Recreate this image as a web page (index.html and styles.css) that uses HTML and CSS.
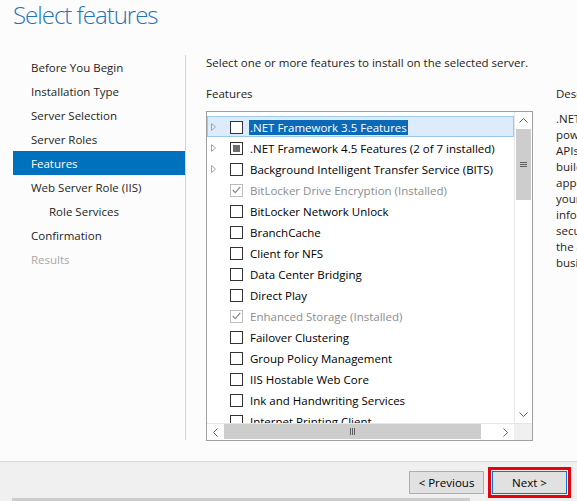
FILE: index.html
```html
<!DOCTYPE html>
<html>
<head>
<meta charset="utf-8">
<link rel="stylesheet" href="styles.css">
</head>
<body>
<div class="window">
  <header class="hdr"><h1 class="title">Select features</h1></header>
  <div class="main">
    <nav class="nav">
      <div class="nav-item">Before You Begin</div>
      <div class="nav-item">Installation Type</div>
      <div class="nav-item">Server Selection</div>
      <div class="nav-item">Server Roles</div>
      <div class="nav-item active">Features</div>
      <div class="nav-item">Web Server Role (IIS)</div>
      <div class="nav-item sub">Role Services</div>
      <div class="nav-item">Confirmation</div>
      <div class="nav-item disabled">Results</div>
    </nav>
    <section class="content">
      <p class="intro">Select one or more features to install on the selected server.</p>
      <div class="cols">
        <div class="feat-col">
          <div class="col-h">Features</div>
          <div class="listbox">
            <div class="list-area">
              <div class="rows">
                <div class="row sel"><svg class="exp" viewBox="0 0 5 8"><polygon points="0.5,0.5 4.5,4 0.5,7.5" fill="none" stroke="#a6a6a6"/></svg><span class="cb"></span><span class="lbl hl">.NET Framework 3.5 Features</span></div>
                <div class="row"><svg class="exp" viewBox="0 0 5 8"><polygon points="0.5,0.5 4.5,4 0.5,7.5" fill="none" stroke="#a6a6a6"/></svg><span class="cb ind"></span><span class="lbl">.NET Framework 4.5 Features (2 of 7 installed)</span></div>
                <div class="row"><svg class="exp" viewBox="0 0 5 8"><polygon points="0.5,0.5 4.5,4 0.5,7.5" fill="none" stroke="#a6a6a6"/></svg><span class="cb"></span><span class="lbl">Background Intelligent Transfer Service (BITS)</span></div>
                <div class="row dis"><span class="exp"></span><span class="cb"><svg width="9" height="8" viewBox="0 0 9 8"><polyline points="0.8,4 3.3,6.6 8.2,0.8" fill="none" stroke="#8a8a8a" stroke-width="1.3"/></svg></span><span class="lbl">BitLocker Drive Encryption (Installed)</span></div>
                <div class="row"><span class="exp"></span><span class="cb"></span><span class="lbl">BitLocker Network Unlock</span></div>
                <div class="row"><span class="exp"></span><span class="cb"></span><span class="lbl">BranchCache</span></div>
                <div class="row"><span class="exp"></span><span class="cb"></span><span class="lbl">Client for NFS</span></div>
                <div class="row"><span class="exp"></span><span class="cb"></span><span class="lbl">Data Center Bridging</span></div>
                <div class="row"><span class="exp"></span><span class="cb"></span><span class="lbl">Direct Play</span></div>
                <div class="row dis"><span class="exp"></span><span class="cb"><svg width="9" height="8" viewBox="0 0 9 8"><polyline points="0.8,4 3.3,6.6 8.2,0.8" fill="none" stroke="#8a8a8a" stroke-width="1.3"/></svg></span><span class="lbl">Enhanced Storage (Installed)</span></div>
                <div class="row"><span class="exp"></span><span class="cb"></span><span class="lbl">Failover Clustering</span></div>
                <div class="row"><span class="exp"></span><span class="cb"></span><span class="lbl">Group Policy Management</span></div>
                <div class="row"><span class="exp"></span><span class="cb"></span><span class="lbl">IIS Hostable Web Core</span></div>
                <div class="row"><span class="exp"></span><span class="cb"></span><span class="lbl">Ink and Handwriting Services</span></div>
                <div class="row"><span class="exp"></span><span class="cb"></span><span class="lbl">Internet Printing Client</span></div>
              </div>
              <div class="vscroll">
                <div class="sb-btn"><svg width="9" height="5" viewBox="0 0 9 5"><polyline points="0.5,4.5 4.5,0.5 8.5,4.5" fill="none" stroke="#606060"/></svg></div>
                <div class="vthumb"><svg width="7" height="5" viewBox="0 0 7 5"><path d="M0 0.5H7M0 2.5H7M0 4.5H7" stroke="#606060"/></svg></div>
                <div class="vtrack"></div>
                <div class="sb-btn"><svg width="9" height="5" viewBox="0 0 9 5"><polyline points="0.5,0.5 4.5,4.5 8.5,0.5" fill="none" stroke="#606060"/></svg></div>
              </div>
            </div>
            <div class="hscroll">
              <div class="sb-btn h"><svg width="5" height="9" viewBox="0 0 5 9"><polyline points="4.5,0.5 0.5,4.5 4.5,8.5" fill="none" stroke="#606060"/></svg></div>
              <div class="htrack"><div class="hthumb"><svg width="5" height="7" viewBox="0 0 5 7"><path d="M0.5 0V7M2.5 0V7M4.5 0V7" stroke="#606060"/></svg></div></div>
              <div class="sb-btn h"><svg width="5" height="9" viewBox="0 0 5 9"><polyline points="0.5,0.5 4.5,4.5 0.5,8.5" fill="none" stroke="#606060"/></svg></div>
              <div class="corner"></div>
            </div>
          </div>
        </div>
        <div class="desc-col">
          <div class="col-h">Description</div>
          <p class="desc">.NET Framework 3.5 combines the<br>power of the .NET Framework 2.0<br>APIs with new technologies for<br>building applications that offer<br>appealing user interfaces, protect<br>your customers' personal identity<br>information, enable seamless and<br>secure communication, and provide<br>the ability to model a range of<br>business processes.</p>
        </div>
      </div>
    </section>
  </div>
  <footer class="footer">
    <button class="btn">&lt; Previous</button>
    <button class="btn next">Next &gt;</button>
  </footer>
  <div class="strip"><div class="strip-bar"></div></div>
</div>
</body>
</html>
```
FILE: styles.css
```css
* { box-sizing: border-box; }
html, body { margin: 0; padding: 0; }
body {
  width: 577px;
  height: 501px;
  overflow: hidden;
  background: #fcfcfc;
  font-family: "Open Sans", "Noto Sans", sans-serif;
  font-size: 11.5px;
  color: #1e1e1e;
}
.window { display: flex; flex-direction: column; height: 501px; }
.hdr { height: 55px; flex: none; padding-left: 13px; }
.title {
  margin: 0;
  font-weight: 300;
  font-size: 24px;
  line-height: 30px;
  color: #1f73b7;
  letter-spacing: -1px;
  white-space: nowrap;
}
.main { flex: 1; display: flex; min-height: 0; }
.nav {
  width: 186px;
  flex: none;
  height: 385px;
  border-right: 1px solid #d5d5d5;
  padding-left: 13px;
}
.nav-item {
  height: 24px;
  padding: 3px 0 0 18px;
  line-height: 20px;
  white-space: nowrap;
}
.nav-item.active { background: #0071bc; color: #fff; }
.nav-item.sub { padding-left: 36px; }
.nav-item.disabled { color: #a8a8a8; }

.content { flex: 1; padding-left: 20px; min-width: 0; }
.intro { margin: 0; line-height: 16px; white-space: nowrap; }
.cols { display: flex; margin-top: 15px; }
.feat-col { width: 327px; flex: none; }
.col-h { line-height: 16px; height: 16px; margin-bottom: 9px; white-space: nowrap; }
.desc-col { margin-left: 23px; width: 220px; flex: none; }
.desc { margin: 7px 0 0; line-height: 16px; white-space: nowrap; }

.listbox {
  height: 330px;
  border: 1px solid #a0a0a0;
  background: #fff;
  display: flex;
  flex-direction: column;
}
.list-area { display: flex; height: 311px; flex: none; }
.rows { width: 307px; flex: none; padding-top: 4px; overflow: hidden; }
.row {
  height: 21px;
  padding: 1px 0 0 4px;
  display: flex;
  align-items: center;
  white-space: nowrap;
}
.row.sel { background: #dcecfc; outline: 1px solid #9dc8ee; outline-offset: -1px; }
.exp { width: 5px; height: 8px; margin-right: 14px; flex: none; display: block; }
.cb {
  width: 13px;
  height: 13px;
  border: 1px solid #333;
  background: #fff;
  flex: none;
  display: flex;
  align-items: center;
  justify-content: center;
}
.cb.ind::after { content: ""; width: 7px; height: 7px; background: #6e6e6e; }
.row.dis .cb { border-color: #bcbcbc; }
.lbl { margin-left: 6px; line-height: 15px; padding: 0 1px; color: #000; }
.lbl.hl { background: #0a6ab8; color: #fff; }
.row.dis .lbl { color: #8d8d8d; }

.vscroll {
  width: 18px;
  flex: none;
  border-left: 1px solid #e6e6e6;
  display: flex;
  flex-direction: column;
}
.sb-btn { height: 17px; flex: none; display: flex; align-items: center; justify-content: center; }
.sb-btn.h { width: 17px; height: auto; }
.vthumb {
  height: 71px;
  flex: none;
  margin: 0 1px;
  background: #cdcdcd;
  display: flex;
  align-items: center;
  justify-content: center;
}
.vtrack { flex: 1; }
.hscroll { height: 17px; flex: none; display: flex; border-top: 1px solid #e6e6e6; }
.htrack { flex: 1; }
.hthumb {
  width: 257px;
  height: 15px;
  background: #cdcdcd;
  display: flex;
  align-items: center;
  justify-content: center;
}
.corner { width: 18px; flex: none; background: #f0f0f0; }

.footer {
  height: 37px;
  flex: none;
  border-top: 1px solid #dadada;
  background: #f0f0f0;
  display: flex;
  justify-content: flex-end;
  gap: 8px;
  padding: 9px 10px 0 0;
}
.btn {
  width: 75px;
  height: 23px;
  border: 1px solid #adadad;
  background: #e1e1e1;
  font: inherit;
  color: #000;
  padding: 0;
  line-height: 21px;
}
.btn.next { border-color: #0078d7; outline: 3px solid #e8000b; outline-offset: 1px; }
.strip { height: 3px; flex: none; background: #f0f0f0; padding-left: 12px; }
.strip-bar { width: 458px; height: 3px; background: #cdcdcd; }
```
